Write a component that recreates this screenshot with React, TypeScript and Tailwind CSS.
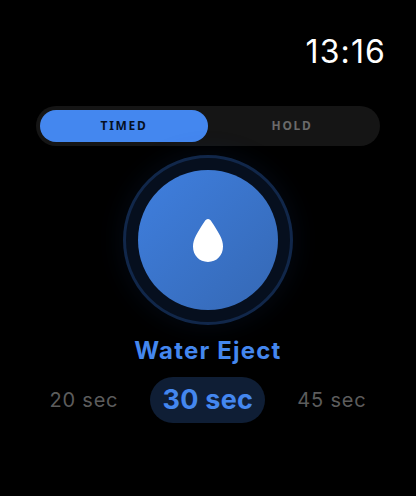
const options = [
  { label: "20 sec", active: false },
  { label: "30 sec", active: true },
  { label: "45 sec", active: false },
];

const DropIcon = () => (
  <svg width="30" height="43" viewBox="0 0 30 43" fill="white">
    <path d="M15 0C16.5 0 17.5 1 18.6 2.7C21.5 7.2 24.5 11.6 27 16.4C28.9 20 30 23.6 30 27.6C30 36.6 23.6 43 15 43C6.4 43 0 36.6 0 27.6C0 23.6 1.1 20 3 16.4C5.5 11.6 8.5 7.2 11.4 2.7C12.5 1 13.5 0 15 0Z" />
  </svg>
);

const App = () => {
  return (
    <div className="w-[416px] h-[496px] bg-black overflow-hidden font-['Inter',sans-serif]">
      <div className="flex justify-end pt-[32px] pr-[30px] h-[106px]">
        <span className="text-[32px] leading-[39px] tracking-[0.035em] text-white">13:16</span>
      </div>

      <div className="ml-[36px] w-[344px] h-[40px] rounded-full bg-[#151515] p-[4px] flex">
        <div className="w-[168px] h-[32px] rounded-full bg-[#4487ef] flex items-center justify-center">
          <span className="text-[12px] font-bold tracking-[0.14em] text-[#06101f] font-['Noto_Sans',sans-serif]">TIMED</span>
        </div>
        <div className="flex-1 flex items-center justify-center">
          <span className="text-[12px] font-bold tracking-[0.14em] text-[#6a6a6a] font-['Noto_Sans',sans-serif]">HOLD</span>
        </div>
      </div>

      <div className="flex justify-center mt-[9px]">
        <div className="w-[170px] h-[170px] rounded-full border-[3px] border-[#11274a] flex items-center justify-center bg-[#060f1e] shadow-[0_0_28px_rgba(30,80,160,0.14)]">
          <div className="w-[140px] h-[140px] rounded-full bg-gradient-to-br from-[#3f7fdf] to-[#3568b4] flex items-center justify-center">
            <DropIcon />
          </div>
        </div>
      </div>

      <div className="mt-[10px] text-center text-[24px] leading-[32px] font-bold tracking-[0.05em] text-[#4487ef]">
        Water Eject
      </div>

      <div className="mt-[10px] flex items-center justify-center gap-[32px]">
        {options.map(option => (
          <div
            key={option.label}
            className={
              option.active
                ? "w-[115px] h-[46px] rounded-full bg-[#0f1e35] flex items-center justify-center text-[27px] leading-[46px] font-bold tracking-[0.01em] text-[#4487ef]"
                : "text-[20px] leading-[46px] tracking-[0.04em] text-[#5c5c5c]"
            }
          >
            {option.label}
          </div>
        ))}
      </div>
    </div>
  );
};

export default App;
